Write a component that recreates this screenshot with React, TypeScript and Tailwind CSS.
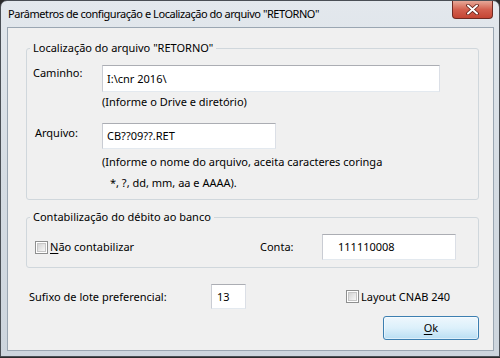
import React from "react";

const font = { fontFamily: '"Noto Sans", "Open Sans", sans-serif' };

function Checkbox() {
  return (
    <span className="inline-flex w-[13px] h-[13px] shrink-0 border border-[#8e8f8f] bg-white p-[1px]">
      <span className="block w-full h-full border border-[#c6c6c6] bg-gradient-to-br from-[#d4d4d4] to-[#f7f7f7]" />
    </span>
  );
}

function TextBox({ value, className, pad }: { value: string; className: string; pad: string }) {
  return (
    <div
      className={`flex items-center bg-white border border-t-[#abadb3] border-l-[#c9ccd3] border-r-[#dbdfe6] border-b-[#e3e9ef] text-[11px] leading-4 text-black ${pad} ${className}`}
    >
      {value}
    </div>
  );
}

export default function App() {
  return (
    <div
      className="w-[500px] h-[358px] overflow-hidden bg-[#2b2b2b] text-black"
      style={font}
    >
      <div className="w-[500px] h-[357px] rounded-t-[7px] border border-[#4a4f55] bg-gradient-to-b from-[#e3e8ed] via-[#d5dce3] to-[#cdd5dd] flex flex-col">
        {/* title bar */}
        <div className="h-[26px] flex items-start shrink-0">
          <div className="pl-[7px] pt-[5px] text-[11px] tracking-[-0.45px] leading-4 text-black flex-1 whitespace-nowrap">
            Parâmetros de configuração e Localização do arquivo "RETORNO"
          </div>
          <div className="mr-[6px] w-[41px] h-[18px] rounded-b-[4px] border border-t-0 border-[#6f2a22] bg-gradient-to-b from-[#e6a898] via-[#d3604f] to-[#c44533] flex items-center justify-center">
            <svg width="13" height="11" viewBox="0 0 13 11">
              <path d="M2 1.5 L11 9.5 M11 1.5 L2 9.5" stroke="#5a1a12" strokeWidth="3.6" strokeLinecap="round" />
              <path d="M2 1.5 L11 9.5 M11 1.5 L2 9.5" stroke="#ffffff" strokeWidth="2" strokeLinecap="round" />
            </svg>
          </div>
        </div>

        {/* client area */}
        <div className="ml-[6px] w-[487px] h-[324px] border border-[#9aa6b2] bg-[#f0f0f0] flex flex-col shrink-0">
          {/* group 1 */}
          <fieldset className="ml-[18px] mt-[12px] w-[453px] border border-[#d0d7dc] rounded-[3px] pb-[8px]">
            <legend className="ml-[3px] px-[3px] text-[11px] leading-4">Localização do arquivo "RETORNO"</legend>
            <div className="flex items-start mt-[9px]">
              <div className="pl-[6px] w-[75px] text-[11px] leading-4 mt-[0px]">Caminho:</div>
              <TextBox value="I:\cnr 2016\" className="w-[338px] h-[27px]" pad="pl-[4px]" />
            </div>
            <div className="ml-[75px] mt-[2px] text-[11px] leading-4">(Informe o Drive e diretório)</div>
            <div className="flex items-start mt-[13px]">
              <div className="pl-[8px] w-[75px] text-[11px] leading-4 mt-[2px]">Arquivo:</div>
              <TextBox value="CB??09??.RET" className="w-[174px] h-[26px]" pad="pl-[4px]" />
            </div>
            <div className="ml-[75px] mt-[5px] text-[11px] leading-4">(Informe o nome do arquivo, aceita caracteres coringa</div>
            <div className="ml-[83px] mt-[5px] text-[11px] leading-4">*, ?, dd, mm, aa e AAAA).</div>
          </fieldset>

          {/* group 2 */}
          <fieldset className="ml-[18px] mt-[9px] w-[453px] border border-[#d0d7dc] rounded-[3px] pb-[7px]">
            <legend className="ml-[3px] px-[3px] text-[11px] leading-4">Contabilização do débito ao banco</legend>
            <div className="flex items-center mt-[9px] h-[26px]">
              <div className="pl-[8px] flex items-center gap-[2px] w-[233px] text-[11px] leading-4">
                <Checkbox />
                <span>
                  <span className="underline underline-offset-2">N</span>ão contabilizar
                </span>
              </div>
              <div className="w-[62px] text-[11px] leading-4">Conta:</div>
              <TextBox value="111110008" className="w-[134px] h-[26px]" pad="pl-[15px]" />
            </div>
          </fieldset>

          {/* bottom row */}
          <div className="flex items-center mt-[16px] ml-[21px] h-[25px]">
            <div className="w-[182px] text-[11px] leading-4">Sufixo de lote preferencial:</div>
            <TextBox value="13" className="w-[35px] h-[25px]" pad="pl-[5px]" />
            <div className="ml-[100px] flex items-center gap-[2px] text-[11px] leading-4">
              <Checkbox />
              <span>Layout CNAB 240</span>
            </div>
          </div>

          <div className="flex justify-end mt-[7px] mr-[14px]">
            <button className="w-[96px] h-[24px] rounded-[3px] border border-[#3c7fb1] bg-gradient-to-b from-[#eef7fd] via-[#dcf0fb] to-[#b9def3] shadow-[inset_0_0_0_1px_#ffffff80] text-[11px] leading-4 text-black">
              <span className="underline underline-offset-2">O</span>k
            </button>
          </div>
        </div>
      </div>
    </div>
  );
}
